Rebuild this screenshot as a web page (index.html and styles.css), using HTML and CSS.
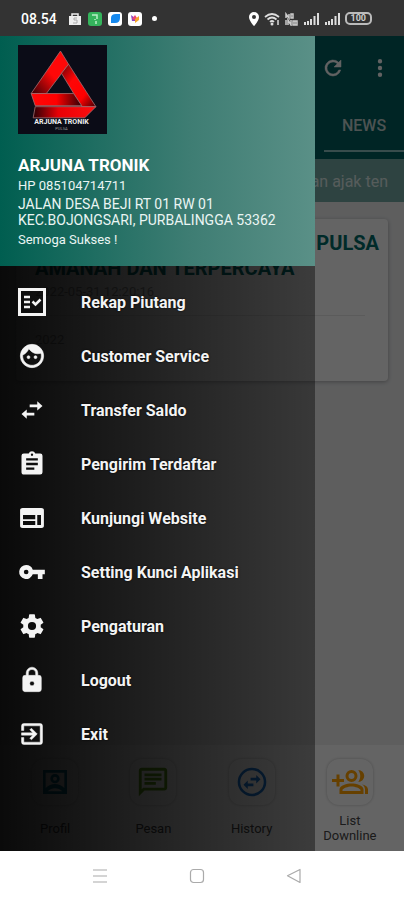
FILE: index.html
```html
<!DOCTYPE html>
<html lang="id">
<head>
<meta charset="utf-8">
<meta name="viewport" content="width=device-width, initial-scale=1">
<title>Arjuna Tronik</title>
<link rel="stylesheet" href="styles.css">
</head>
<body>
<div class="screen">
  <header class="status">
    <div class="status-group">
      <span class="clock">08.54</span>
      <svg width="14" height="14" viewBox="0 0 14 14"><path d="M1 4h12v9H1z" fill="#eee"/><path d="M4 4V2h6v2" fill="none" stroke="#eee" stroke-width="1.5"/><path d="M9 6H6v2h3v3H5" fill="none" stroke="#aaa"/></svg>
      <svg width="14" height="14" viewBox="0 0 14 14"><rect width="14" height="14" rx="3" fill="#35b45c"/><path d="M4 3h5v4M7 7v1M8 9v3" stroke="#b9efc8" stroke-width="1.5" fill="none"/></svg>
      <svg width="14" height="14" viewBox="0 0 14 14"><rect width="14" height="14" rx="3" fill="#fff"/><path d="M3 11V6q0-4 5-4h4v4q0 5-5 5z" fill="#1689ee"/></svg>
      <svg width="14" height="14" viewBox="0 0 14 14"><rect width="14" height="14" rx="3" fill="#fff"/><path d="M3 3l4 3v3H4z" fill="#8b45c4"/><path d="M7 3l2 3-2 2-3-1z" fill="#ef4773"/><path d="M7 7l4-3v4l-4 3z" fill="#f4a62a"/></svg>
      <span class="dot"></span>
    </div>
    <div class="status-group status-right">
      <svg width="12" height="14" viewBox="0 0 12 14"><path fill="#fff" fill-rule="evenodd" d="M6 0a5 5 0 0 0-5 5c0 4 5 9 5 9s5-5 5-9a5 5 0 0 0-5-5zm0 3a2 2 0 1 1 0 4 2 2 0 0 1 0-4z"/></svg>
      <svg width="17" height="14" viewBox="0 0 17 14"><path d="M1 5q7-6 14 0M3.500 7.500q4.500-4 9 0M6 10q2-2 4 0" fill="none" stroke="#ddd" stroke-width="1.700"/><circle cx="8" cy="12" r="1.500" fill="#ddd"/><path d="M14 8v5" stroke="#ddd" stroke-width="1.500"/></svg>
      <svg width="14" height="14" viewBox="0 0 14 14"><path d="M1 6V2l3 4V2M6 2v4h2V2zM1 8v5M3 13V8l3 5V8M8 9v4h4V9zM10 9v4" fill="none" stroke="#ccc" stroke-width="1.500"/></svg>
      <svg width="17" height="14" viewBox="0 0 17 14"><path d="M2 10v3M5 9v4M8 7v6M11.500 4v9M15 1v12" stroke="#ddd" stroke-width="2"/></svg>
      <svg width="17" height="14" viewBox="0 0 17 14"><path d="M2 10v3M5 9v4M8 7v6M11.500 4v9M15 1v12" stroke="#ddd" stroke-width="2"/></svg>
      <span class="battery">100</span>
    </div>
  </header>

  <div class="app">
    <main class="page">
      <div class="toolbar">
        <button class="tool" aria-label="Refresh"><svg width="24" height="24" viewBox="0 0 24 24"><path fill="currentColor" stroke="currentColor" stroke-width=".5" d="M17.650 6.350A8 8 0 1 0 19.730 14h-2.080A6 6 0 1 1 12 6c1.660 0 3.140.690 4.220 1.780L13 11h7V4z"/></svg></button>
        <button class="tool" aria-label="Menu"><svg width="24" height="24" viewBox="0 0 24 24"><path fill="currentColor" d="M12 7.500a2.200 2.200 0 1 0 0-4.400 2.200 2.200 0 0 0 0 4.400zm0 2.300a2.200 2.200 0 1 0 0 4.400 2.200 2.200 0 0 0 0-4.400zm0 6.700a2.200 2.200 0 1 0 0 4.400 2.200 2.200 0 0 0 0-4.400z"/></svg></button>
      </div>
      <nav class="tabs"><a class="tab" href="#news">NEWS</a></nav>
      <div class="ticker">an ajak ten</div>
      <section class="feed">
        <article class="card">
          <h2 class="card-title"><span class="card-title-end">PULSA</span><span>AMANAH DAN TERPERCAYA</span></h2>
          <p class="card-date">2022-05-31 12:20:16</p>
          <p class="card-text">2022</p>
        </article>
      </section>
      <nav class="bottom">
        <a class="bottom-item" href="#profil"><span class="tile profile"><svg width="32" height="32" viewBox="0 0 24 24"><path fill="currentColor" fill-rule="evenodd" d="M3 3h18v18H3zM5 5v11.500c4-4 10-4 14 0V5zm1.500 14h11c-3-3-8-3-11 0zM12 6a3.500 3.500 0 1 1 0 7 3.500 3.500 0 0 1 0-7zm0 2a1.500 1.500 0 1 0 0 3 1.500 1.500 0 0 0 0-3z"/></svg></span><span class="label">Profil</span></a>
        <a class="bottom-item" href="#pesan"><span class="tile message"><svg width="34" height="34" viewBox="0 0 24 24"><path fill="currentColor" d="M4 4h16v12H5.170L4 17.170V4m0-2c-1.100 0-1.990.900-1.990 2L2 22l4-4h14c1.100 0 2-.900 2-2V4c0-1.100-.900-2-2-2zM6 12h8v2H6zm0-3h12v2H6zm0-3h12v2H6z"/></svg></span><span class="label">Pesan</span></a>
        <a class="bottom-item" href="#history"><span class="tile history"><svg width="34" height="34" viewBox="0 0 24 24"><circle cx="12" cy="12" r="9.200" fill="none" stroke="currentColor" stroke-width="1.800"/><path fill="currentColor" d="M15 7l3 3-3 3v-2h-4V9h4zM9 11l-3 3 3 3v-2h4v-2H9z"/></svg></span><span class="label">History</span></a>
        <a class="bottom-item" href="#downline"><span class="tile downline"><svg width="36" height="36" viewBox="0 0 24 24"><path fill="currentColor" fill-rule="evenodd" d="M5 7v3H8v2H5v3H3v-3H0v-2h3V7zM13 4a4 4 0 1 1 0 8 4 4 0 0 1 0-8zm0 2a2 2 0 1 0 0 4 2 2 0 0 0 0-4zM17.500 4a4 4 0 0 1 0 8c1.800-2.500 1.800-5.500 0-8zM13 13c3 0 8 1.300 8 4v3H5v-3c0-2.700 5-4 8-4zm0 2c-2.500 0-5.500 1.200-6 2.200V18h12v-.800c-.500-1-3.500-2.200-6-2.200zM20 13.500c2.500.700 4 1.900 4 3.500v3h-2v-3c0-1.500-.700-2.600-2-3.500z"/></svg></span><span class="label">List Downline</span></a>
      </nav>
    </main>

    <div class="scrim">
      <aside class="drawer">
        <div class="account">
          <svg class="logo" viewBox="0 0 88 88" role="img" aria-label="Logo">
            <defs>
              <linearGradient id="a" x1="1" y1="0" x2="0" y2="1"><stop offset=".5" stop-color="#ff0808"/><stop offset="1" stop-color="#350006"/></linearGradient>
              <linearGradient id="b" x1="0" y1="0" x2="1" y2="1"><stop offset="0" stop-color="#620006"/><stop offset=".35" stop-color="#ff0606"/><stop offset=".7" stop-color="#f00"/><stop offset="1" stop-color="#430005"/></linearGradient>
              <linearGradient id="c"><stop offset="0" stop-color="#ff0808"/><stop offset=".5" stop-color="#f00"/><stop offset="1" stop-color="#300006"/></linearGradient>
              <linearGradient id="d"><stop offset="0" stop-color="#2b0005"/><stop offset=".4" stop-color="#e80006"/><stop offset="1" stop-color="#ff1010"/></linearGradient>
            </defs>
            <rect width="88" height="88" fill="#0b0c17"/>
            <g stroke="#a56d70" stroke-width=".8" stroke-linejoin="round">
              <path d="M42 6l8 13-22 29H13z" fill="url(#a)"/>
              <path d="M50 19l27 42H63L43 28z" fill="url(#b)"/>
              <path d="M13 48h42l8 12H17z" fill="url(#c)"/>
              <path d="M17 61h60L66 72H15z" fill="url(#d)"/>
            </g>
            <text x="43" y="78" text-anchor="middle" class="logo-name">ARJUNA TRONIK</text>
            <text x="43" y="84" text-anchor="middle" class="logo-sub">PULSA</text>
          </svg>
          <h1 class="name">ARJUNA TRONIK</h1>
          <p class="phone">HP 085104714711</p>
          <p class="address">JALAN DESA BEJI RT 01 RW 01<br>KEC.BOJONGSARI, PURBALINGGA 53362</p>
          <p class="greeting">Semoga Sukses !</p>
        </div>
        <nav class="menu">
          <a class="menu-item" href="#rekap"><svg viewBox="0 0 28 28"><path fill="currentColor" fill-rule="evenodd" d="M0 0h28v28H0zM3 3v22h22V3z"/><path d="M6 9h6M6 14h6M6 19h6M14.500 13.500l3 3 5-5" fill="none" stroke="currentColor" stroke-width="2.500"/></svg>Rekap Piutang</a>
          <a class="menu-item" href="#cs"><svg viewBox="0 0 24 24"><path fill="currentColor" stroke="currentColor" stroke-width=".5" d="M9 11.750a1.250 1.250 0 1 0 0 2.500 1.250 1.250 0 0 0 0-2.500zm6 0a1.250 1.250 0 1 0 0 2.500 1.250 1.250 0 0 0 0-2.500zM12 2a10 10 0 1 0 0 20 10 10 0 0 0 0-20zm0 18c-4.410 0-8-3.590-8-8 0-.290.020-.580.050-.860 2.360-1.050 4.230-2.980 5.210-5.370a9.970 9.970 0 0 0 10.410 3.970c.210.710.330 1.470.330 2.260 0 4.410-3.590 8-8 8z"/></svg>Customer Service</a>
          <a class="menu-item" href="#transfer"><svg viewBox="0 0 24 24"><path fill="currentColor" d="M16.500 4.500l4.500 4-4.500 4v-2.800H10V7.300h6.500zM7.500 11.500l-4.500 4 4.500 4v-2.800H14v-2.400H7.500z"/></svg>Transfer Saldo</a>
          <a class="menu-item" href="#pengirim"><svg viewBox="0 0 24 24"><path fill="currentColor" d="M19 3h-4.180a3 3 0 0 0-5.640 0H5a2 2 0 0 0-2 2v14c0 1.100.900 2 2 2h14a2 2 0 0 0 2-2V5a2 2 0 0 0-2-2zm-7 0a1 1 0 1 1 0 2 1 1 0 0 1 0-2zm2 14H7v-2h7zm3-4H7v-2h10zm0-4H7V7h10z"/></svg>Pengirim Terdaftar</a>
          <a class="menu-item" href="#website"><svg viewBox="0 0 24 24"><path fill="currentColor" d="M20 3.500H4A2.200 2.200 0 0 0 1.800 6v12A2.200 2.200 0 0 0 4 20.500h16a2.200 2.200 0 0 0 2.200-2.500V6A2.200 2.200 0 0 0 20 3.500zM14.800 18H4.300v-3.500h10.500zm0-5H4.300V9.500h10.500zm4.900 5h-3.200V9.500h3.200z"/></svg>Kunjungi Website</a>
          <a class="menu-item" href="#kunci"><svg viewBox="0 0 24 24"><path fill="currentColor" d="M12.650 10A5.990 5.990 0 0 0 7 6a6 6 0 1 0 5.650 8H17v4h4v-4h2v-4zM7 14a2 2 0 1 1 0-4 2 2 0 0 1 0 4z"/></svg>Setting Kunci Aplikasi</a>
          <a class="menu-item" href="#pengaturan"><svg viewBox="0 0 24 24"><path fill="currentColor" d="M19.430 12.980c.040-.320.070-.640.070-.980s-.030-.660-.070-.980l2.110-1.650a.500.500 0 0 0 .120-.640l-2-3.460a.500.500 0 0 0-.610-.220l-2.490 1a7.300 7.300 0 0 0-1.690-.980l-.380-2.650A.490.490 0 0 0 14 2h-4a.490.490 0 0 0-.490.420l-.380 2.650c-.610.250-1.170.590-1.690.980l-2.490-1a.490.490 0 0 0-.610.220l-2 3.460a.490.490 0 0 0 .120.640l2.110 1.650a7.900 7.900 0 0 0 0 1.960l-2.110 1.650a.500.500 0 0 0-.120.640l2 3.460c.120.220.390.300.610.220l2.490-1c.520.400 1.080.730 1.690.980l.380 2.650c.030.240.240.420.490.420h4c.250 0 .460-.180.490-.420l.380-2.650a7.700 7.700 0 0 0 1.690-.980l2.490 1c.230.090.490 0 .610-.220l2-3.460a.500.500 0 0 0-.120-.640zM12 15.500a3.500 3.500 0 1 1 0-7 3.500 3.500 0 0 1 0 7z"/></svg>Pengaturan</a>
          <a class="menu-item" href="#logout"><svg viewBox="0 0 24 24"><path fill="currentColor" stroke="currentColor" stroke-width=".4" d="M18 8h-1V6A5 5 0 0 0 7 6v2H6a2 2 0 0 0-2 2v10c0 1.100.900 2 2 2h12a2 2 0 0 0 2-2V10a2 2 0 0 0-2-2zm-6 9a2 2 0 1 1 0-4 2 2 0 0 1 0 4zm3.100-9H8.900V6a3.100 3.100 0 0 1 6.200 0z"/></svg>Logout</a>
          <a class="menu-item" href="#exit"><svg viewBox="0 0 24 24"><path fill="currentColor" stroke="currentColor" stroke-width=".4" d="M10.090 15.590L11.500 17l5-5-5-5-1.410 1.410L12.670 11H3v2h9.670zM19 3H5a2 2 0 0 0-2 2v4h2V5h14v14H5v-4H3v4a2 2 0 0 0 2 2h14a2 2 0 0 0 2-2V5a2 2 0 0 0-2-2z"/></svg>Exit</a>
        </nav>
      </aside>
    </div>
  </div>

  <footer class="system">
    <button aria-label="Recents"><svg width="16" height="16" viewBox="0 0 16 16"><path d="M1 2h14M1 8h14M1 14h14" stroke="#aaa" stroke-width="1.200"/></svg></button>
    <button aria-label="Home"><svg width="16" height="16" viewBox="0 0 16 16"><rect x="1.500" y="1.500" width="13" height="13" rx="3" fill="none" stroke="#aaa" stroke-width="1.200"/></svg></button>
    <button aria-label="Back"><svg width="16" height="16" viewBox="0 0 16 16"><path d="M1.500 7.700L14 1.500v13z" fill="none" stroke="#aaa" stroke-width="1.200" stroke-linejoin="round"/></svg></button>
  </footer>
</div>
</body>
</html>
```
FILE: styles.css
```css
* { box-sizing: border-box; }
body, h1, h2, p { margin: 0; }
body { font-family: Roboto, "Liberation Sans", sans-serif; background: #fff; }
a { color: inherit; text-decoration: none; }
button { border: 0; padding: 0; background: none; color: inherit; display: flex; }
svg { flex: none; display: block; }

.screen { min-height: 100vh; display: flex; flex-direction: column; }

.status {
  height: 36px;
  display: flex;
  align-items: center;
  justify-content: space-between;
  padding: 1px 32px 0 21px;
  background: #333;
  color: #fff;
}
.status-group { display: flex; align-items: center; gap: 6px; }
.status-right { gap: 4px; }
.clock { font-size: 14px; font-weight: 500; margin-right: 5px; }
.dot { width: 5px; height: 5px; border-radius: 50%; background: #fff; margin-left: 4px; }
.battery {
  border: 2px solid #bbb;
  border-radius: 5px;
  padding: 0 4px;
  font-size: 9px;
  line-height: 9px;
  font-weight: 700;
  color: #ccc;
}

.app { position: relative; flex: 1; display: flex; }
.page { flex: 1; display: flex; flex-direction: column; background: #eaebec; overflow: hidden; }
.toolbar {
  height: 64px;
  display: flex;
  align-items: center;
  justify-content: flex-end;
  gap: 23px;
  padding-right: 12px;
  background: #005c5e;
  color: #f4f4f4;
}
.tabs { height: 59px; display: flex; justify-content: flex-end; padding-bottom: 7px; background: #005c5e; }
.tab {
  width: 80px;
  display: flex;
  align-items: center;
  justify-content: center;
  border-bottom: 2px solid #8cbfbd;
  color: #c0d0ce;
  font-size: 16px;
  font-weight: 500;
}
.ticker {
  height: 43px;
  padding: 0 16px;
  background: #74a8a3;
  color: #d8e6e4;
  font-size: 16px;
  line-height: 46px;
  text-align: right;
}
.feed { flex: 1; padding: 17px 16px; }
.card {
  height: 162px;
  padding: 12px 9px 0 19px;
  border-radius: 4px;
  background: #fafafa;
  box-shadow: 0 1px 4px rgba(0, 0, 0, .3);
}
.card-title { display: flex; flex-direction: column; color: #006a66; font-size: 20px; line-height: 25px; font-weight: 700; }
.card-title-end { text-align: right; }
.card-date { margin-right: 14px; padding: 2px 0 14px; border-bottom: 1px solid #e4e4e4; color: #999; font-size: 13px; line-height: 18px; }
.card-text { padding-top: 15px; color: #999; font-size: 13px; line-height: 18px; }

.bottom { height: 106px; display: flex; padding: 14px 5px 0 6px; background: #fafafa; }
.bottom-item { flex: 1; display: flex; flex-direction: column; align-items: center; }
.tile { width: 46px; height: 46px; display: flex; align-items: center; justify-content: center; border-radius: 12px; box-shadow: 0 0 3px rgba(0, 0, 0, .25); }
.profile { color: #007c9c; }
.message { color: #5c9e14; }
.history { color: #1873cf; }
.downline { color: #ffa000; }
.label { flex: 1; max-width: 64px; display: flex; align-items: center; text-align: center; font-size: 13px; line-height: 15px; color: #444; }

.scrim { position: absolute; inset: 0; display: flex; background: rgba(0, 0, 0, .6); }
.drawer { width: 78%; background: linear-gradient(90deg, rgba(0, 0, 0, .9), rgba(0, 0, 0, .4)); color: #fff; }
.account { height: 230px; padding: 9px 18px 0; background: linear-gradient(90deg, #005e50, #3e7d73 60%, #5a9087); }
.logo { width: 89px; height: 89px; }
.logo-name { font-size: 7px; font-weight: 700; fill: #eee; }
.logo-sub { font-size: 4px; fill: #999; }
.name { margin-top: 20px; font-size: 17px; line-height: 22px; font-weight: 700; }
.phone { font-size: 13px; line-height: 20px; }
.address { font-size: 14px; line-height: 16px; white-space: nowrap; }
.address, .phone, .greeting { color: #eaf5f3; }
.greeting { padding-top: 3px; font-size: 13px; line-height: 18px; }
.menu { padding-top: 9px; }
.menu-item {
  height: 54px;
  display: grid;
  grid-template-columns: 28px 1fr;
  align-items: center;
  column-gap: 35px;
  padding-left: 18px;
  font-size: 16px;
  font-weight: 700;
  color: #f4f4f4;
  text-shadow: 0 0 2px #000;
}
.menu-item svg { width: 28px; height: 28px; }

.system { height: 49px; display: flex; align-items: center; justify-content: center; gap: 81px; padding-right: 10px; background: #fff; }
```
